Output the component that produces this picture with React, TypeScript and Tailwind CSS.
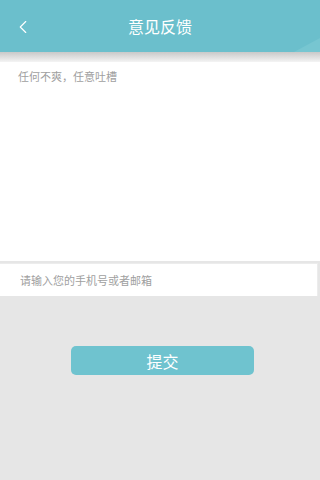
import { ChevronLeft } from "lucide-react";

export default function App() {
  return (
    <div
      className="w-[320px] h-[480px] bg-[#e6e6e6] flex flex-col overflow-hidden"
      style={{ fontFamily: '"Noto Sans CJK SC", "Liberation Sans", sans-serif' }}
    >
      <header className="relative h-[52px] shrink-0 bg-[#6bbfcc] flex items-center justify-center">
        <button className="absolute left-[12px] top-[16px] text-white">
          <ChevronLeft size={22} strokeWidth={1.25} />
        </button>
        <h1 className="text-[16px] text-white">意见反馈</h1>
        {/* faint corner fold */}
        <div className="absolute right-0 bottom-0 w-[26px] h-[14px] bg-[#77c6d1] [clip-path:polygon(100%_0,100%_100%,0_100%)]" />
      </header>
      <div className="h-[10px] shrink-0 bg-gradient-to-b from-[#c9c9c9] to-[#f4f4f4]" />

      <textarea
        className="h-[199px] shrink-0 bg-white px-[18px] pt-[6px] text-[11px] text-[#333] placeholder:text-[#a0a0a0] resize-none outline-none"
        placeholder="任何不爽，任意吐槽"
      />

      <div className="mt-[2px] border-t border-[#ececec] bg-white h-[33px] shrink-0 mr-[2px] border-r border-r-[#ececec] flex items-center">
        <input
          className="w-full px-[20px] text-[11px] text-[#333] placeholder:text-[#a0a0a0] outline-none"
          placeholder="请输入您的手机号或者邮箱"
        />
      </div>

      <div className="flex pt-[50px] pl-[71px]">
        <button className="w-[183px] h-[29px] rounded-[5px] bg-[#6fc3cf] text-white text-[16px] leading-none">
          提交
        </button>
      </div>
    </div>
  );
}
